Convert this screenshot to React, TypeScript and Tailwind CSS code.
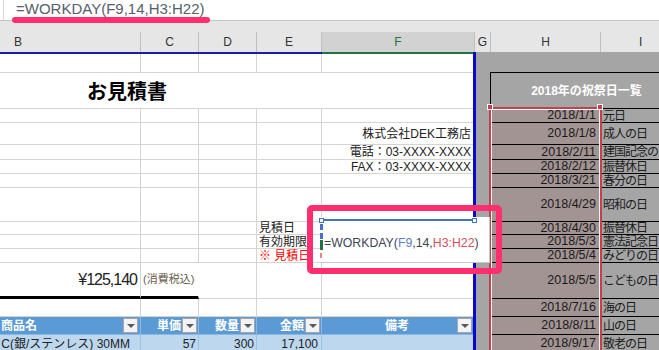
import type { ReactNode } from "react";

const holidays: [string, string][] = [
  ["2018/1/1", "元日"],
  ["2018/1/8", "成人の日"],
  ["2018/2/11", "建国記念の日"],
  ["2018/2/12", "振替休日"],
  ["2018/3/21", "春分の日"],
  ["2018/4/29", "昭和の日"],
  ["2018/4/30", "振替休日"],
  ["2018/5/3", "憲法記念日"],
  ["2018/5/4", "みどりの日"],
  ["2018/5/5", "こどもの日"],
  ["2018/7/16", "海の日"],
  ["2018/8/11", "山の日"],
  ["2018/9/17", "敬老の日"],
];

type RowDef = {
  h: string;
  e?: string;
  f?: string;
  red?: boolean;
  kind?: "title" | "total" | "thead" | "tbody";
};

const rows: RowDef[] = [
  { h: "h-[19px]" },
  { h: "h-[36px]", kind: "title" },
  { h: "h-[14px]" },
  { h: "h-[22px]", f: "株式会社DEK工務店" },
  { h: "h-[15px]", f: "電話：03-XXXX-XXXX" },
  { h: "h-[14px]", f: "FAX：03-XXXX-XXXX" },
  { h: "h-[14px]" },
  { h: "h-[34px]" },
  { h: "h-[13px]", e: "見積日" },
  { h: "h-[14px]", e: "有効期限" },
  { h: "h-[14px]", e: "※ 見積日", red: true },
  { h: "h-[36px]", kind: "total" },
  { h: "h-[18px]" },
  { h: "h-[18px]", kind: "thead" },
  { h: "h-[18px]", kind: "tbody" },
];

const cell = "shrink-0 flex items-center whitespace-nowrap border-b border-r border-[#d4d4d4]";

const Filter = () => (
  <span className="w-[15px] h-[15px] shrink-0 bg-[#f3f3f3] border border-[#a6a6a6] flex items-center justify-center">
    <span className="border-x-[4px] border-x-transparent border-t-[4px] border-t-[#595959]" />
  </span>
);

function LeftCells({ row }: { row: RowDef }) {
  if (row.kind === "title") {
    return (
      <div className={`${cell} w-[473px] border-r-0 pl-[87px] text-[20px] font-bold text-black font-['Noto_Sans_CJK_JP',sans-serif]`}>
        お見積書
      </div>
    );
  }
  if (row.kind === "total") {
    return (
      <>
        <div className={`${cell} w-[141px] justify-end pr-[3px] border-b-[3px] border-b-black text-[16px] tracking-[-1px] text-[#222]`}>
          ¥125,140
        </div>
        <div className={`${cell} w-[58px] border-r-transparent border-b-[3px] border-b-black pl-[2px] text-[11px] text-[#6b5b4b]`}>
          (消費税込)
        </div>
        <div className={`${cell} w-[58px]`} />
        <div className={`${cell} w-[65px]`} />
        <div className={`${cell} w-[151px] border-r-0`} />
      </>
    );
  }
  if (row.kind === "thead") {
    const th = "shrink-0 flex items-center gap-[1px] whitespace-nowrap bg-[#5b9bd5] border-r border-b border-[#8fb6e0] text-white font-bold text-[12px]";
    return (
      <>
        <div className={`${th} w-[141px] justify-between pl-[1px] pr-[2px]`}>
          <span>商品名</span>
          <Filter />
        </div>
        <div className={`${th} w-[58px] justify-end pr-[1px]`}>
          <span>単価</span>
          <Filter />
        </div>
        <div className={`${th} w-[58px] justify-end pr-[1px]`}>
          <span>数量</span>
          <Filter />
        </div>
        <div className={`${th} w-[65px] justify-end pr-[1px]`}>
          <span>金額</span>
          <Filter />
        </div>
        <div className={`${th} w-[151px] border-r-0 pl-[16px] pr-[1px]`}>
          <span className="flex-1 text-center">備考</span>
          <Filter />
        </div>
      </>
    );
  }
  if (row.kind === "tbody") {
    const td = "shrink-0 flex items-center whitespace-nowrap overflow-hidden bg-[#bdd7ee] border-r border-b border-[#9dc3e6] text-[12px] text-[#222]";
    return (
      <>
        <div className={`${td} w-[141px] justify-end pr-[10px]`}>六角ボルトC(銀/ステンレス) 30MM</div>
        <div className={`${td} w-[58px] justify-end pr-[2px]`}>57</div>
        <div className={`${td} w-[58px] justify-end pr-[2px]`}>300</div>
        <div className={`${td} w-[65px] justify-end pr-[3px]`}>17,100</div>
        <div className={`${td} w-[151px] border-r-0`} />
      </>
    );
  }
  return (
    <>
      <div className={`${cell} w-[141px]`} />
      <div className={`${cell} w-[58px]`} />
      <div className={`${cell} w-[58px]`} />
      <div className={`${cell} w-[65px] pl-[2px] text-[12px] ${row.red ? "text-[#ff0000]" : "text-[#222]"}`}>{row.e}</div>
      <div className={`${cell} w-[151px] border-r-0 justify-end pr-[2px] text-[12px] text-[#222]`}>{row.f}</div>
    </>
  );
}

function RightCells({ index }: { index: number }) {
  const gray = "bg-[#a5a5a5]";
  let h: ReactNode;
  if (index === 0) {
    h = (
      <>
        <div className={`w-[110px] shrink-0 ${gray} border-b border-black`} />
        <div className={`w-[82px] shrink-0 ${gray} border-b border-black`} />
      </>
    );
  } else if (index === 1) {
    h = (
      <div className={`w-[192px] shrink-0 ${gray} border-l border-b border-black flex items-center justify-center text-white font-bold text-[12px]`}>
        2018年の祝祭日一覧
      </div>
    );
  } else {
    const [date, name] = holidays[index - 2];
    h = (
      <>
        <div className="w-[110px] shrink-0 bg-[#a39494] border-b border-r border-black flex items-center justify-end pr-[3px] text-[12.5px] text-[#1a1a1a]">
          {date}
        </div>
        <div className={`w-[82px] shrink-0 ${gray} border-b border-black flex items-center pl-[3px] whitespace-nowrap text-[12px] tracking-[-1px] text-[#1a1a1a]`}>
          {name}
        </div>
      </>
    );
  }
  return (
    <>
      <div className="w-[3px] shrink-0 bg-[#0808d0]" />
      <div className={`w-[14px] shrink-0 ${gray}`} />
      {h}
    </>
  );
}

const ColHead = ({ w, label, className = "" }: { w: string; label: string; className?: string }) => (
  <div className={`${w} shrink-0 h-full flex items-center justify-center border-r border-[#bfbfbf] ${className}`}>{label}</div>
);

export default function App() {
  return (
    <div className="relative w-[659px] h-[350px] overflow-hidden bg-white font-['Liberation_Sans','Noto_Sans_CJK_JP',sans-serif] leading-none">
      {/* formula bar */}
      <div className="h-[21px] bg-white border-b border-[#c6c6c6] pl-[3px]">
        <div className="h-full border-l border-[#d6d6d6] pl-[12px] pt-[1px] text-[15px] leading-[16px] text-[#56606c]">
          =WORKDAY(F9,14,H3:H22)
        </div>
      </div>
      <div className="absolute left-[12px] top-[17px] w-[198px] h-[6px] rounded-full bg-[#ff2e6e]" />

      {/* header band + column letters */}
      <div className="h-[11px] bg-[#e6e6e6]" />
      <div className="flex h-[20px] bg-[#e6e6e6] text-[12px] text-[#333]">
        <div className="w-[141px] shrink-0 h-full flex items-center pl-[14px] border-r border-[#bfbfbf]">B</div>
        <ColHead w="w-[58px]" label="C" />
        <ColHead w="w-[58px]" label="D" />
        <ColHead w="w-[65px]" label="E" />
        <ColHead w="w-[153px]" label="F" className="bg-[#d2d2d2] text-[#217346]" />
        <ColHead w="w-[16px]" label="G" />
        <ColHead w="w-[110px]" label="H" />
        <div className="flex-1 h-full flex items-center pl-[38px]">I</div>
      </div>
      <div className="flex h-[2px]">
        <div className="w-[322px] bg-[#1c1ca6]" />
        <div className="w-[151px] bg-[#217346]" />
        <div className="w-[3px] bg-[#0808d0]" />
        <div className="flex-1 bg-[#a5a5a5]" />
      </div>

      {/* sheet rows */}
      <div className="flex flex-col">
        {rows.map((row, i) => (
          <div key={i} className={`flex ${row.h}`}>
            <LeftCells row={row} />
            <RightCells index={i} />
          </div>
        ))}
      </div>

      {/* H3:H22 reference range */}
      <div className="absolute left-[489px] top-[107px] w-[113px] h-[260px] border-2 border-[#c4404c]">
        <div className="w-full h-full border border-white" />
      </div>
      <div className="absolute left-[487px] top-[104px] w-[6px] h-[6px] bg-[#c4404c] border border-white" />
      <div className="absolute left-[597px] top-[104px] w-[6px] h-[6px] bg-[#c4404c] border border-white" />

      {/* cell editor */}
      <div className="absolute left-[320px] top-[217px] w-[170px] h-[46px] bg-white border-r border-b border-[#c8c8c8]">
        <div className="absolute left-[2px] top-[2px] w-[153px] h-[2px] bg-[#4472c4]" />
        <div className="absolute left-[-1px] top-[1px] w-[5px] h-[5px] bg-white border border-[#4472c4]" />
        <div className="absolute left-[152px] top-[1px] w-[5px] h-[5px] bg-white border border-[#4472c4]" />
        <div className="absolute left-0 top-[7px] h-[15px] border-l-[3px] border-dashed border-[#4472c4]" />
        <div className="absolute left-0 top-[23px] w-[3px] h-[10px] bg-[#217346]" />
        <div className="absolute left-0 top-[36px] w-[2px] h-[5px] bg-[#f08080]" />
        <div className="absolute left-[4px] top-[19px] whitespace-nowrap text-[12.3px] leading-[14px] text-[#3d4654]">
          =WORKDAY(<span className="text-[#5b80cc]">F9</span>,14,<span className="text-[#d4505c]">H3:H22</span>)
        </div>
      </div>
      <div className="absolute left-[307px] top-[205px] w-[195px] h-[69px] border-[6px] border-[#ff2e6e] rounded-[5px]" />
    </div>
  );
}
